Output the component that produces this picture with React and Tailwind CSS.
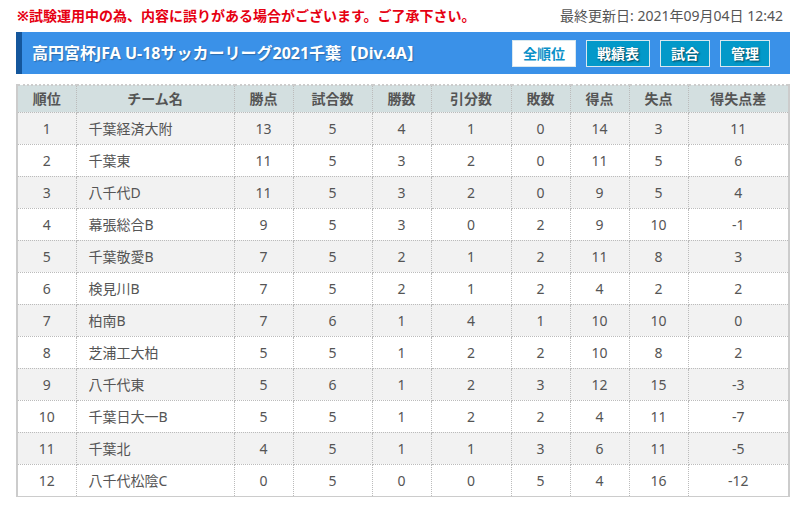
import React from "react";

const rows = [
  [1, "千葉経済大附", 13, 5, 4, 1, 0, 14, 3, 11],
  [2, "千葉東", 11, 5, 3, 2, 0, 11, 5, 6],
  [3, "八千代D", 11, 5, 3, 2, 0, 9, 5, 4],
  [4, "幕張総合B", 9, 5, 3, 0, 2, 9, 10, -1],
  [5, "千葉敬愛B", 7, 5, 2, 1, 2, 11, 8, 3],
  [6, "検見川B", 7, 5, 2, 1, 2, 4, 2, 2],
  [7, "柏南B", 7, 6, 1, 4, 1, 10, 10, 0],
  [8, "芝浦工大柏", 5, 5, 1, 2, 2, 10, 8, 2],
  [9, "八千代東", 5, 6, 1, 2, 3, 12, 15, -3],
  [10, "千葉日大一B", 5, 5, 1, 2, 2, 4, 11, -7],
  [11, "千葉北", 4, 5, 1, 1, 3, 6, 11, -5],
  [12, "八千代松陰C", 0, 5, 0, 0, 5, 4, 16, -12],
];

const heads = ["順位", "チーム名", "勝点", "試合数", "勝数", "引分数", "敗数", "得点", "失点", "得失点差"];
const widths = ["w-[59px]", "w-[158px]", "w-[59px]", "w-[79px]", "w-[59px]", "w-[80px]", "w-[59px]", "w-[59px]", "w-[59px]", "w-[101px]"];

const NavButton = ({ label, active, width }) => (
  <button
    className={`${width} h-[27px] border border-[#d8e8f0] text-[14px] font-bold flex items-center justify-center ${
      active ? "bg-white text-[#0a90c8]" : "bg-[#0399c9] text-white [text-shadow:1px_1px_2px_rgba(0,0,0,0.6)]"
    }`}
  >
    {label}
  </button>
);

export default function App() {
  return (
    <div className="w-[809px] h-[511px] bg-white font-['Noto_Sans','Noto_Sans_CJK_JP',sans-serif] text-[#555]">
      <div className="flex items-center justify-between pl-[17px] pr-[26px] h-[32px] pb-[1px]">
        <span className="text-[#e60012] text-[14px] font-bold">※試験運用中の為、内容に誤りがある場合がございます。ご了承下さい。</span>
        <span className="text-[14px] text-[#555]">最終更新日: 2021年09月04日 12:42</span>
      </div>

      <div className="mx-[16px] w-[774px] h-[42px] bg-[#3a91e8] border-l-[6px] border-[#14569c] flex items-center justify-between pl-[10px] pr-[20px]">
        <h1 className="text-white text-[16px] font-bold [text-shadow:1px_1px_1px_rgba(0,0,0,0.25)]">
          高円宮杯JFA U-18サッカーリーグ2021千葉【Div.4A】
        </h1>
        <div className="flex gap-[10px]">
          <NavButton label="全順位" active width="w-[64px]" />
          <NavButton label="戦績表" width="w-[64px]" />
          <NavButton label="試合" width="w-[50px]" />
          <NavButton label="管理" width="w-[50px]" />
        </div>
      </div>

      <table className="mx-[16px] mt-[10px] border-collapse border-x-2 border-y border-[#ccc] text-[14px] table-fixed w-[774px]">
        <thead>
          <tr className="bg-[#d3dfe0] h-[27px]">
            {heads.map((h, i) => (
              <th
                key={h}
                className={`${widths[i]} font-bold text-[#555] border-x border-dotted border-[#bbb] border-t-2 border-t-[#ccc] border-b border-b-[#bbb] text-center p-0`}
              >
                {h}
              </th>
            ))}
          </tr>
        </thead>
        <tbody>
          {rows.map((r, ri) => (
            <tr key={r[0]} className={`h-[32px] ${ri % 2 === 0 ? "bg-[#f2f2f2]" : "bg-white"}`}>
              {r.map((c, ci) => (
                <td
                  key={ci}
                  className={`border border-dotted border-[#bbb] p-0 ${ci === 1 ? "text-left pl-[12px]" : "text-center"}`}
                >
                  {c}
                </td>
              ))}
            </tr>
          ))}
        </tbody>
      </table>
    </div>
  );
}
